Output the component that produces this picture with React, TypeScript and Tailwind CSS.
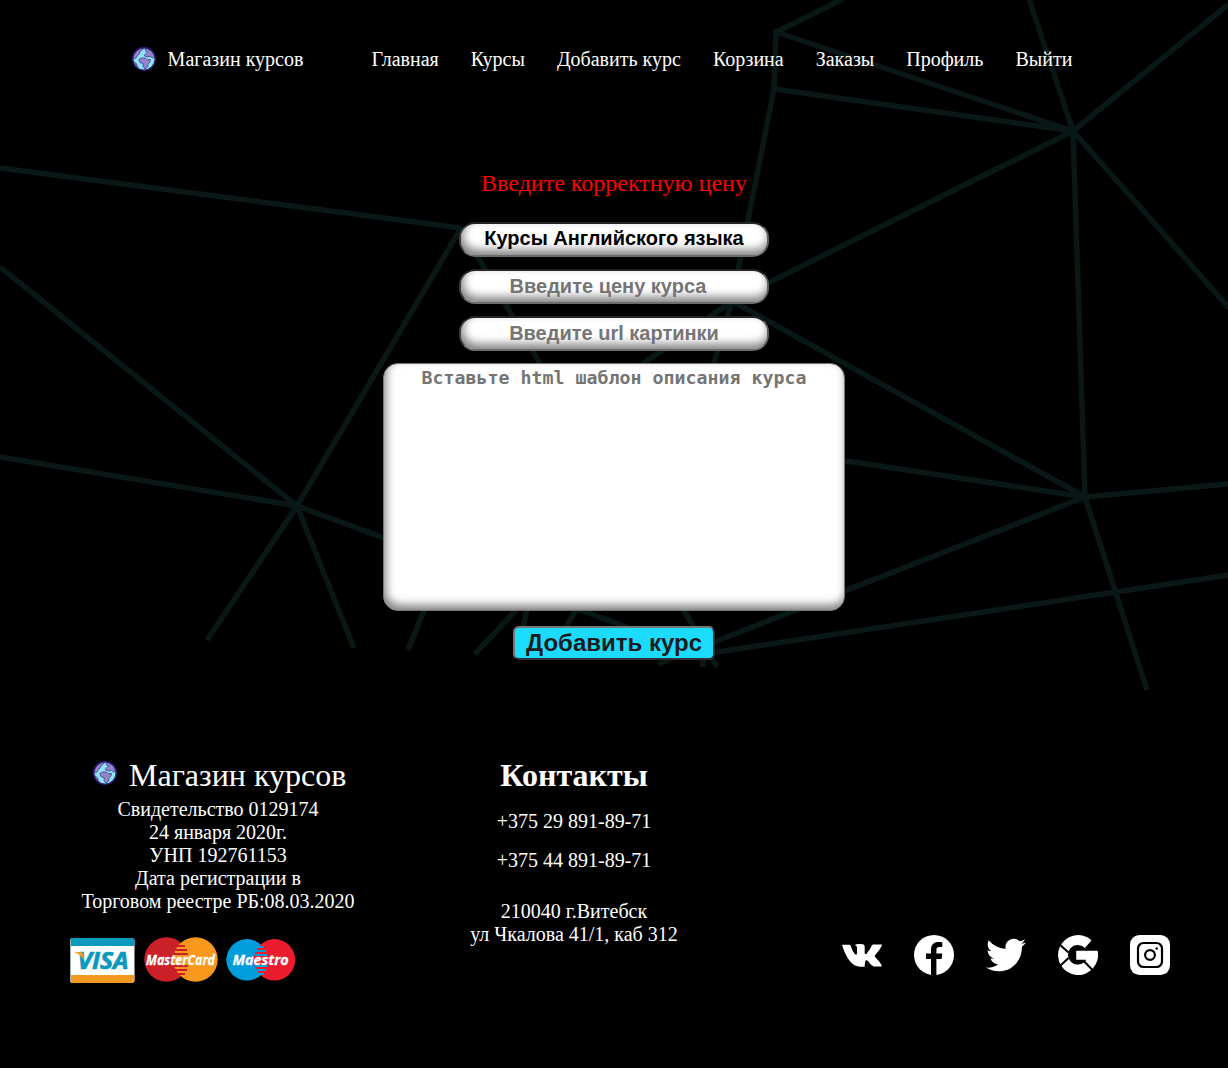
import React from "react";
import { FaTwitter } from "react-icons/fa";

const navItems = ["Главная", "Курсы", "Добавить курс", "Корзина", "Заказы", "Профиль", "Выйти"];

function Backdrop() {
  return (
    <svg
      className="absolute left-0 top-0 pointer-events-none"
      width="1228"
      height="1068"
      viewBox="0 0 1228 1068"
      fill="none"
      stroke="#0a1717"
      strokeWidth="5.5"
    >
      <path d="M0 168L461 228M0 267L297 506M0 457L297 506M461 228L297 506L207 640M297 506L354 648M297 506L703 655" />
      <path d="M461 228L717 667M408 650L425 608M475 654L517 609M527 608L523 628M577 608L565 629" />
      <path d="M843 -1L776 32L774 89L732 301L712 370M732 301L640 366M776 32L1073 131L774 89M1073 131L1029 -1M1073 131L1229 4" />
      <path d="M1073 131L732 301L1085 497L1073 131L1229 308M840 460L1085 497L1229 484M1085 497L1147 690M1085 497L658 664M1229 575L690 656M703 667V650" />
    </svg>
  );
}

function Globe() {
  return (
    <svg width="24" height="24" viewBox="0 0 24 24" className="relative -top-px block shrink-0">
      <circle cx="12" cy="12" r="11.2" fill="#8de5f4" />
      <g fill="#9385cd" stroke="#3b2a80" strokeWidth="0.7" strokeLinejoin="round">
        <path d="M1.2 11C1.5 6 4.5 2.6 9 1.2L11.6 1.4L10 3.4L7.4 5L7.8 6.6L5.6 8.2L4.2 10.8L2.6 11.8Z" />
        <path d="M13.2 1.3C16.4 1.6 19.6 3.2 21.4 6L22.8 10.2L20.6 11L18.6 9.4L15.4 10L12.2 8.8L13.6 6.8L15.6 5.4L13.4 3.8Z" />
        <path d="M6.8 12.4L10.4 10.8L14 11.4L15.4 12.8L18.4 12.4L18 15L16 17L15.6 20L12.8 22L11 19.4L11.2 16.6L8 15.6Z" />
        <path d="M1.4 14.4L4.4 16.6L5.8 21C3.4 19.4 2 17.2 1.4 14.4Z" />
      </g>
      <circle cx="12" cy="12" r="11.2" fill="none" stroke="#2f1c7c" strokeWidth="1.4" />
    </svg>
  );
}

function Visa() {
  return (
    <svg width="65" height="46" viewBox="0 0 65 46" className="mt-px block">
      <rect width="64.5" height="45" rx="3" fill="#fff" />
      <path d="M0 8V3Q0 0 3 0H61.5Q64.5 0 64.5 3V8Z" fill="#0899bd" />
      <path d="M0 37H64.5V42Q64.5 45 61.5 45H3Q0 45 0 42Z" fill="#f29b20" />
      <path d="M0 2H1V43H0Z" fill="#a0b0b4" />
      <text x="7.5" y="30.5" fill="#0899bd" stroke="#0899bd" strokeWidth=".7" fontFamily="Open Sans, sans-serif" fontSize="23" fontWeight="700" fontStyle="italic" textLength="51" lengthAdjust="spacingAndGlyphs">VISA</text>
      <path d="M4 14H10.5Q12.8 14 13.2 16.5L13.8 22Q10.5 16 4 14Z" fill="#f29b20" />
    </svg>
  );
}

function MasterCard() {
  return (
    <svg width="74" height="46" viewBox="0 0 74 46" className="block overflow-visible">
      <circle cx="22.5" cy="22.5" r="22.2" fill="#cb2027" />
      <circle cx="51.5" cy="22.5" r="22.2" fill="#f8981d" />
      <path d="M33 9H41M31 13H43M30 17H44M30 29H44M31 33H43M33 37H41" stroke="#cb2027" strokeWidth="1.8" />
      <text x="2" y="27.8" fill="#fff" stroke="#fff" strokeWidth=".3" fontFamily="Open Sans, sans-serif" fontSize="15" fontWeight="700" fontStyle="italic" textLength="69" lengthAdjust="spacingAndGlyphs">MasterCard</text>
    </svg>
  );
}

function Maestro() {
  return (
    <svg width="70" height="46" viewBox="0 0 70 46" className="block">
      <circle cx="21" cy="22.8" r="20.7" fill="#009ddd" />
      <circle cx="48.5" cy="22.8" r="20.7" fill="#ed1b2e" />
      <path d="M32 10H38M30 14H40M29 18H41M29 29H41M30 33H40M32 37H38" stroke="#009ddd" strokeWidth="1.8" />
      <text x="6.5" y="28" fill="#fff" stroke="#fff" strokeWidth=".3" fontFamily="Open Sans, sans-serif" fontSize="15" fontWeight="700" fontStyle="italic" textLength="56" lengthAdjust="spacingAndGlyphs">Maestro</text>
    </svg>
  );
}

function VkIcon() {
  return (
    <svg width="40" height="40" viewBox="0 0 40 40" className="block">
      <path
        transform="translate(0 9)"
        d="M0 .7H7Q8.3 .7 8.8 2C10 5.6 12 10 13.9 10.8C14.8 11 15 9.5 15 8V4C15 2.5 14.3 1.6 13 1.2C14 0 16 -.1 18.5 0C21.5 0 22.7 .6 22.7 3V8.5C22.7 10.3 23.7 10.7 25 9.2C27 7 28.5 4 29.8 1.6Q30.3 .6 31.5 .6H40C40 3 35 9 33.2 11.2C32.5 12.2 32.8 13 34 14C36 16 39 19 40 22.5H31.8C29.5 21.8 27.5 18 25.2 16.4C23.5 15.6 23 17 22.7 22.7H18.5C10 22.7 4 14 0 .7Z"
        fill="#fff"
      />
    </svg>
  );
}

function FacebookIcon() {
  return (
    <svg width="40" height="40" viewBox="0 0 40 40" className="block">
      <circle cx="20" cy="20" r="20" fill="#fff" />
      <path d="M17 40V24H12V18.5H17V14.5C17 9.5 20 7 24.3 7C26 7 27.3 7.1 28.3 7.3V12H25.5C23.2 12 22.4 13.2 22.4 15V18.5H28.3L27.6 24H22.4V40Z" fill="#000" />
    </svg>
  );
}

function GoogleIcon() {
  return (
    <svg width="40" height="40" viewBox="0 0 40 40" className="block">
      <path d="M33.6 5.3A20 20 0 1 0 39.6 15.7H18.2V24.7H28.2A9.8 9.8 0 1 1 26.9 13Z" fill="#fff" />
      <path d="M2.5 10.3L10.5 17.6M10.5 22.9L2.5 30.5M25.5 25.8L34.5 35" stroke="#000" strokeWidth="2" />
    </svg>
  );
}

function InstagramIcon() {
  return (
    <svg width="40" height="40" viewBox="0 0 40 40" className="block">
      <rect width="40" height="40" rx="9.5" fill="#fff" />
      <rect x="8" y="8" width="24" height="24" rx="5.5" fill="none" stroke="#000" strokeWidth="2.2" />
      <circle cx="20" cy="20" r="4.9" fill="none" stroke="#000" strokeWidth="2.2" />
      <circle cx="26.7" cy="13.5" r="1.2" fill="#000" />
    </svg>
  );
}

function Field({ extra, ...props }: React.InputHTMLAttributes<HTMLInputElement> & { extra?: string }) {
  return (
    <input
      {...props}
      className={`block h-[35px] w-[310px] rounded-[16px] border-2 border-t-[#242424] border-l-[#3c3c3c] border-r-[#606060] border-b-[#6c6c6c] bg-white text-center text-[20px] font-bold text-black outline-none placeholder:text-[#757575] placeholder:opacity-100 font-['Liberation_Sans',sans-serif] shadow-[inset_2px_-5px_10px_#808080] ${extra ?? ""}`}
    />
  );
}

export default function App() {
  return (
    <div className="relative h-[1068px] w-[1228px] overflow-hidden bg-black text-[20px] leading-[23px] text-white font-['Liberation_Serif',serif]">
      <Backdrop />
      <div className="relative flex h-full flex-col">
        <header className="flex h-[119px] items-center whitespace-nowrap pl-[131.6px]">
          <div className="flex w-[240px] items-center gap-3">
            <Globe />
            <span>Магазин курсов</span>
          </div>
          <nav className="flex gap-8">
            {navItems.map((item) => (
              <a key={item} href="#">{item}</a>
            ))}
          </nav>
        </header>

        <main className="flex h-[641px] flex-col items-center pt-[50px]">
          <p className="h-[53px] text-[24px] leading-[29px] text-[#f00]">Введите корректную цену</p>
          <div className="flex flex-col gap-3">
            <Field defaultValue="Курсы Английского языка" extra="pb-[2px]" />
            <Field placeholder="Введите цену курса" extra="pr-[12px]" />
            <Field placeholder="Введите url картинки" />
          </div>
          <textarea
            placeholder="Вставьте html шаблон описания курса"
            className="mt-[12px] block h-[248px] w-[462px] shrink-0 resize-none rounded-[15px] border border-[#767676] bg-white px-0.5 py-[2px] text-center text-[18.27px] leading-[23px] font-bold text-black shadow-[inset_2px_-5px_10px_#808080] outline-none placeholder:text-[#757575] placeholder:opacity-100 font-['DejaVu_Sans_Mono',monospace]"
          />
          <button className="mt-[15px] h-[34px] w-[202px] shrink-0 rounded-[6px] border-2 border-t-[#767676] border-l-[#767676] border-r-[#303030] border-b-[#303030] bg-[#1bdcff] text-[24px] leading-[28px] font-bold whitespace-nowrap text-[#1c1c1c] font-['Liberation_Sans',sans-serif]">
            Добавить курс
          </button>
        </main>

        <footer className="flex items-start text-center whitespace-nowrap">
          <section className="w-[436px]">
            <div className="flex h-[38px] items-start gap-3 pl-[93px]">
              <div className="pt-[2px]"><Globe /></div>
              <h2 className="text-[32px] leading-[30px]">Магазин курсов</h2>
            </div>
            <p>
              Свидетельство 0129174<br />
              24 января 2020г.<br />
              УНП 192761153<br />
              Дата регистрации в<br />
              Торговом реестре РБ:08.03.2020
            </p>
            <div className="flex pt-[24px] pl-[70px]">
              <Visa />
              <div className="pl-[9px]"><MasterCard /></div>
              <div className="pl-2"><Maestro /></div>
            </div>
          </section>
          <section className="w-[276px]">
            <h2 className="h-[50px] text-[32px] leading-[30px] font-bold">Контакты</h2>
            <p>+375 29 891-89-71</p>
            <p className="pt-4">+375 44 891-89-71</p>
            <p className="pt-7">210040 г.Витебск<br />ул Чкалова 41/1, каб 312</p>
          </section>
          <div className="flex gap-8 pt-[175px] pl-[130px]">
            <VkIcon />
            <FacebookIcon />
            <FaTwitter size={40} />
            <GoogleIcon />
            <InstagramIcon />
          </div>
        </footer>
      </div>
    </div>
  );
}
